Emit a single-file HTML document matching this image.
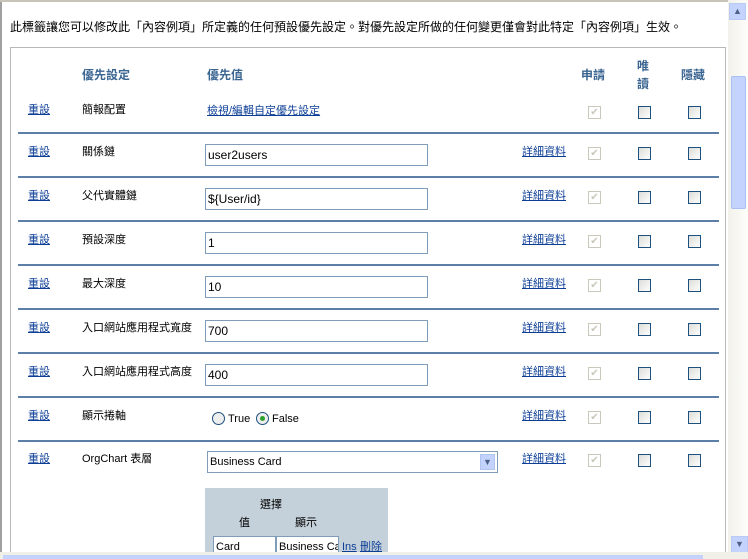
<!DOCTYPE html>
<html><head><meta charset="utf-8"><style>
*{margin:0;padding:0;box-sizing:border-box}
html,body{width:748px;height:559px;overflow:hidden}
body{background:#fff;font-family:"Liberation Sans","Noto Sans CJK TC",sans-serif;font-size:11px;color:#000;position:relative}
.a{position:absolute;white-space:nowrap;line-height:14px}
.lnk{color:#0c3e96;text-decoration:underline}
.hd{color:#3b6591;font-weight:bold;font-size:12px}
.sep{position:absolute;left:18px;width:701px;height:2px;background:#5b7fa6}
.inp{position:absolute;left:205px;width:223px;height:22px;border:1px solid #7f9db9;background:#fff;font-size:12px;padding:3px 2px;line-height:14px;white-space:nowrap;overflow:hidden}
.cb{position:absolute;width:13px;height:13px;border:1px solid #1c5180;background:linear-gradient(135deg,#dcdcd7,#fff)}
.cbd{position:absolute;width:13px;height:13px;border:1px solid #cac8bb;background:#fff;color:#cac8bb;font-size:10px;line-height:11px;text-align:center}
</style></head><body>
<div style="position:absolute;left:0;top:0;width:2px;height:559px;background:#a0a0a0"></div>
<div style="position:absolute;left:0;top:0;width:748px;height:2px;background:#c8c5b8"></div>
<div class="a" style="left:10px;top:20px;font-size:12px">此標籤讓您可以修改此「內容例項」所定義的任何預設優先設定。對優先設定所做的任何變更僅會對此特定「內容例項」生效。</div>
<div style="position:absolute;left:10px;top:47px;width:716px;height:520px;border:1px solid #b8b8b8"></div>
<div class="a hd" style="left:82px;top:68px">優先設定</div>
<div class="a hd" style="left:207px;top:68px">優先值</div>
<div class="a hd" style="left:581px;top:68px">申請</div>
<div class="a hd" style="left:637px;top:59px">唯</div>
<div class="a hd" style="left:637px;top:77px">讀</div>
<div class="a hd" style="left:681px;top:68px">隱藏</div>

<div class="a lnk" style="left:28px;top:103px">重設</div>
<div class="a" style="left:82px;top:103px">簡報配置</div>
<div class="a lnk" style="left:207px;top:104px">檢視/編輯自定優先設定</div>
<div class="cbd" style="left:588px;top:106px">✔</div><div class="cb" style="left:638px;top:106px"></div><div class="cb" style="left:688px;top:106px"></div>

<div class="sep" style="top:132px"></div>
<div class="a lnk" style="left:28px;top:145px">重設</div><div class="a" style="left:82px;top:145px">關係鏈</div>
<div class="inp" style="top:144px">user2users</div>
<div class="a lnk" style="left:522px;top:145px">詳細資料</div>
<div class="cbd" style="left:588px;top:147px">✔</div><div class="cb" style="left:638px;top:147px"></div><div class="cb" style="left:688px;top:147px"></div>

<div class="sep" style="top:176px"></div>
<div class="a lnk" style="left:28px;top:189px">重設</div><div class="a" style="left:82px;top:189px">父代實體鏈</div>
<div class="inp" style="top:188px">${User/id}</div>
<div class="a lnk" style="left:522px;top:189px">詳細資料</div>
<div class="cbd" style="left:588px;top:191px">✔</div><div class="cb" style="left:638px;top:191px"></div><div class="cb" style="left:688px;top:191px"></div>

<div class="sep" style="top:220px"></div>
<div class="a lnk" style="left:28px;top:233px">重設</div><div class="a" style="left:82px;top:233px">預設深度</div>
<div class="inp" style="top:232px">1</div>
<div class="a lnk" style="left:522px;top:233px">詳細資料</div>
<div class="cbd" style="left:588px;top:235px">✔</div><div class="cb" style="left:638px;top:235px"></div><div class="cb" style="left:688px;top:235px"></div>

<div class="sep" style="top:264px"></div>
<div class="a lnk" style="left:28px;top:277px">重設</div><div class="a" style="left:82px;top:277px">最大深度</div>
<div class="inp" style="top:276px">10</div>
<div class="a lnk" style="left:522px;top:277px">詳細資料</div>
<div class="cbd" style="left:588px;top:279px">✔</div><div class="cb" style="left:638px;top:279px"></div><div class="cb" style="left:688px;top:279px"></div>

<div class="sep" style="top:308px"></div>
<div class="a lnk" style="left:28px;top:321px">重設</div><div class="a" style="left:82px;top:321px">入口網站應用程式寬度</div>
<div class="inp" style="top:320px">700</div>
<div class="a lnk" style="left:522px;top:321px">詳細資料</div>
<div class="cbd" style="left:588px;top:323px">✔</div><div class="cb" style="left:638px;top:323px"></div><div class="cb" style="left:688px;top:323px"></div>

<div class="sep" style="top:352px"></div>
<div class="a lnk" style="left:28px;top:365px">重設</div><div class="a" style="left:82px;top:365px">入口網站應用程式高度</div>
<div class="inp" style="top:364px">400</div>
<div class="a lnk" style="left:522px;top:365px">詳細資料</div>
<div class="cbd" style="left:588px;top:367px">✔</div><div class="cb" style="left:638px;top:367px"></div><div class="cb" style="left:688px;top:367px"></div>

<div class="sep" style="top:396px"></div>
<div class="a lnk" style="left:28px;top:409px">重設</div><div class="a" style="left:82px;top:409px">顯示捲軸</div>
<div style="position:absolute;left:212px;top:412px;width:13px;height:13px;border-radius:50%;border:1px solid #1c5180;background:#eee"></div>
<div class="a" style="left:228px;top:412px">True</div>
<div style="position:absolute;left:256px;top:412px;width:13px;height:13px;border-radius:50%;border:1px solid #1c5180;background:#eee"><div style="position:absolute;left:3px;top:3px;width:5px;height:5px;border-radius:50%;background:#2fa02f"></div></div>
<div class="a" style="left:272px;top:412px">False</div>
<div class="a lnk" style="left:522px;top:409px">詳細資料</div>
<div class="cbd" style="left:588px;top:411px">✔</div><div class="cb" style="left:638px;top:411px"></div><div class="cb" style="left:688px;top:411px"></div>

<div class="sep" style="top:440px"></div>
<div class="a lnk" style="left:28px;top:452px">重設</div><div class="a" style="left:82px;top:452px">OrgChart 表層</div>
<div class="inp" style="left:207px;top:451px;width:291px;font-size:11px">Business Card
<div style="position:absolute;right:2px;top:2px;width:15px;height:16px;background:#c3d3fd;border:1px solid #b0c4f0;color:#4d6185;font-size:9px;text-align:center;line-height:14px">▼</div></div>
<div class="a lnk" style="left:522px;top:452px">詳細資料</div>
<div class="cbd" style="left:588px;top:454px">✔</div><div class="cb" style="left:638px;top:454px"></div><div class="cb" style="left:688px;top:454px"></div>

<div style="position:absolute;left:205px;top:488px;width:183px;height:80px;background:#c5d1da"></div>
<div class="a" style="left:260px;top:498px">選擇</div>
<div class="a" style="left:239px;top:516px">值</div>
<div class="a" style="left:295px;top:516px">顯示</div>
<div class="inp" style="left:213px;top:536px;width:63px;font-size:11px">Card</div>
<div class="inp" style="left:276px;top:536px;width:63px;font-size:11px">Business Ca</div>
<div class="a lnk" style="left:342px;top:540px">Ins</div>
<div class="a lnk" style="left:360px;top:540px">刪除</div>

<div style="position:absolute;left:728px;top:0;width:20px;height:552px;background:linear-gradient(90deg,#f2f1ea,#fdfdfa)"></div>
<div style="position:absolute;left:729px;top:3px;width:17px;height:17px;background:#c3d3fd;border:1px solid #b7cbf5;color:#4d6185;font-size:9px;text-align:center;line-height:15px">▲</div>
<div style="position:absolute;left:731px;top:76px;width:15px;height:133px;background:#c3d3fd;border:1px solid #a9c0f4;border-radius:2px"></div>
<div style="position:absolute;left:731px;top:536px;width:17px;height:17px;background:#c3d3fd;border:1px solid #b7cbf5;color:#4d6185;font-size:9px;text-align:center;line-height:15px">▼</div>
<div style="position:absolute;left:0;top:552px;width:748px;height:7px;background:#f0efe8"></div>
<div style="position:absolute;left:3px;top:555px;width:700px;height:4px;background:#c3d3fd"></div>
</body></html>
